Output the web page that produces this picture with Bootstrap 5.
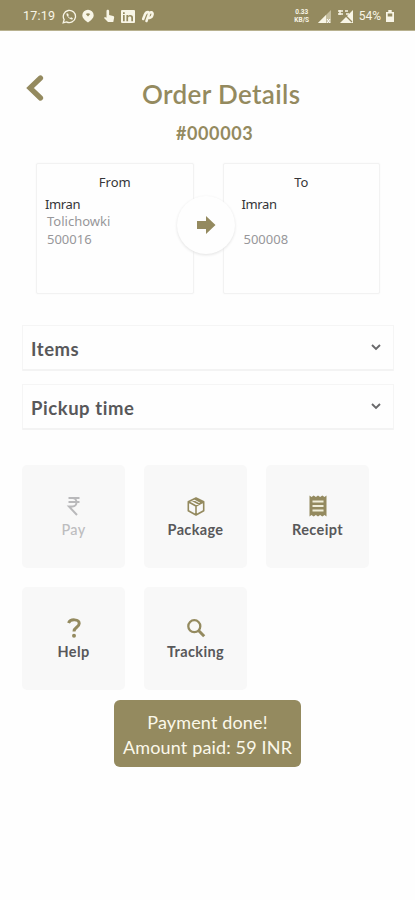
<!DOCTYPE html>
<html lang="en">
<head>
<meta charset="utf-8">
<meta name="viewport" content="width=device-width, initial-scale=1">
<title>Order Details</title>
<link href="https://cdn.jsdelivr.net/npm/bootstrap@5.3.0/dist/css/bootstrap.min.css" rel="stylesheet">
<style>
:root{--olive:#948a5f}
body{font-family:Lato,"Noto Sans",sans-serif;font-variant-ligatures:none;background:#fefefe;color:#58585a;height:900px;overflow:hidden}
svg{display:block;flex:none}
.olive{color:var(--olive)}
.status{height:31px;background:var(--olive);border-bottom:1px solid #b8b18f;color:#f8f5e6;padding:2px 21px 0 23px;font:12px/1 Roboto,sans-serif}
.status .clock{font-size:12.5px;letter-spacing:.25px;width:39px;white-space:nowrap}
.rate{font:bold 6.500px/8px Roboto,sans-serif;width:20px;text-align:center}
.rate span{display:block;height:8px}
.gap-icon{margin-left:6px}
.charge{margin:0 5px 0 5px}
.top-area{height:132px;padding:43px 0 0 25px}
.title{font-size:26px;line-height:32px;font-weight:600;letter-spacing:.35px;white-space:nowrap;margin:4px 0 0 98px}
.order-no{font-size:18px;line-height:24px;font-weight:700;letter-spacing:.6px;margin:11px 0 0 151px}
.addresses{padding:0 35px 0 36px;gap:29px;height:131px}
.address{font:13px/17.500px "Noto Sans",sans-serif;border:1px solid #f2f2f2;border-radius:2px;background:#fefefe;box-shadow:0 0 2px #f6f6f6;padding:9px 8px;color:#97979a}
.address .who{color:#353538;line-height:18px;margin-top:4px;letter-spacing:-.35px}
.address .head{color:#353538;line-height:18px}
.address .line{padding-left:2px}
.to-lines{padding-left:10px}
.go{left:177px;top:33px;width:58px;height:58px;background:#fefefe;box-shadow:0 1px 3px #e2e2e2}
.folds{padding:31px 21px 0 22px;gap:13px}
.fold{height:46px;border:1px solid #f5f5f5;border-bottom:2px solid #f3f3f3;border-radius:1px;background:#fefefe;padding:4px 12px 0 8px;font-size:18.5px;font-weight:700;letter-spacing:.55px}
.fold svg{margin-top:-4px}
.tiles{display:grid;grid-template-columns:repeat(3,103px);gap:19px;padding:35px 0 0 22px}
.tile{height:103px;background:#f8f8f8;border:0;border-radius:5px;padding:30px 0 0;font-size:14.500px;line-height:20px;font-weight:700;color:#58585a;letter-spacing:.35px}
.tile.off{color:#bdbdbf;font-weight:500}
.tile svg{margin-bottom:1px}
.note{width:187px;height:67px;margin:10px 0 0 114px;padding-top:2px;background:var(--olive);border-radius:6px;color:#fbf8ea;font-size:18px;line-height:25px;white-space:nowrap;letter-spacing:.15px}
</style>
<script src="https://cdn.jsdelivr.net/npm/bootstrap@5.3.0/dist/js/bootstrap.bundle.min.js"></script>
</head>
<body>
<header class="status d-flex align-items-center">
  <span class="clock">17:19</span>
  <svg width="15" height="15" viewBox="0 0 16 16" fill="none" stroke="currentColor" stroke-width="1.4"><path d="M1.3 14.7l1-3.4A6.5 6.5 0 1 1 4.800 13.700z"/><path d="M5 4.600c-.8 1 .2 3 1.700 4.500s3.600 2.600 4.600 1.700l.3-1-1.900-1-1 .9c-1-.4-1.800-1.200-2.200-2.200l.8-.9-.9-1.900z" fill="currentColor" stroke="none"/></svg>
  <svg class="ms-1" width="14" height="14" viewBox="0 0 14 14"><path fill="currentColor" d="M7 .8a5.700 5.700 0 0 1 5.700 5.400c0 3-3.100 5.300-5.700 7.300C4.400 11.500 1.300 9.200 1.300 6.200A5.700 5.700 0 0 1 7 .8z"/><path fill="#948a5f" d="M4.800 5c1.400-.9 3-.9 4.400 0L7 7.500z"/></svg>
  <svg class="ms-2" width="12" height="14" viewBox="0 0 12 14" fill="currentColor"><path d="M3.500 2c0-1.600 2.600-1.600 2.600 0v4l4 1c.9.300 1.200 1 1 1.800L10.300 13H5L1 9l.9-1 1.600.8z"/></svg>
  <svg class="gap-icon" width="14" height="13" viewBox="0 0 14 14" preserveAspectRatio="none"><rect width="14" height="14" rx="1" fill="currentColor"/><g fill="#948a5f"><path d="M2 5.500h1.700V12H2zM2 2.500h1.700v1.700H2zM5.400 5.500H7v.8c1.300-1.500 5-1.200 5 1.800V12h-1.700V8.500c0-2-3.200-1.800-3.200 0V12H5.400z"/></g></svg>
  <svg class="gap-icon" width="13" height="14" viewBox="0 0 13 14" fill="none" stroke="currentColor" stroke-width="2.500" stroke-linecap="round"><path d="M2.200 10L3.500 6.500C4.300 4 6 3 7 3M5.500 12L8 5c1-2.500 4-2 3.600.4C11.300 7.500 10 8.700 8.500 9"/></svg>
  <span class="rate ms-auto"><span>0.33</span><span>KB/S</span></span>
  <svg class="gap-icon" width="13" height="13" viewBox="0 0 13 13"><path d="M0 13L13 0v13z" fill="#c4bd9e"/><path d="M0 13l8-8v8z" fill="currentColor"/><path d="M9 9l3 4m0-4l-3 4" stroke="#fff"/></svg>
  <svg class="gap-icon" width="17" height="14" viewBox="0 0 17 14"><path d="M3 14L16 1v13z" fill="currentColor"/><path d="M1 2h5M1 5h5M3 1v5M8 2h3M9 5h3" stroke="currentColor" stroke-width="1.500"/><path d="M7 5l8 8" stroke="#948a5f" stroke-width="1.300"/></svg>
  <span class="charge">54%</span>
  <svg width="8" height="12" viewBox="0 0 7 12" preserveAspectRatio="none"><path d="M2 0h3v2h2v10H0V2h2z" fill="currentColor"/><path d="M1.500 3.500h4v3h-4z" fill="#948a5f"/></svg>
</header>

<main>
  <div class="top-area olive">
    <div class="d-flex">
      <svg width="19" height="28" viewBox="0 0 19 28" fill="none" stroke="currentColor" stroke-width="5.200"><path d="M15.500 4L5 14 15.500 24" stroke-linecap="round"/></svg>
      <h1 class="title">Order Details</h1>
    </div>
    <div class="order-no">#000003</div>
  </div>

  <section class="addresses d-flex position-relative">
    <div class="address flex-fill w-50">
      <div class="head text-center">From</div>
      <div class="who">Imran</div>
      <div class="line">Tolichowki</div>
      <div class="line">500016</div>
    </div>
    <div class="address flex-fill w-50">
      <div class="head text-center">To</div>
      <div class="to-lines">
        <div class="who">Imran</div>
        <div class="line">&nbsp;</div>
        <div class="line">500008</div>
      </div>
    </div>
    <div class="go rounded-circle position-absolute d-flex align-items-center justify-content-center olive">
      <svg width="19" height="18" viewBox="0 0 19 18" fill="currentColor"><path d="M0 5h9V0l9.500 9L9 18v-5H0z"/></svg>
    </div>
  </section>

  <section class="folds d-flex flex-column">
    <div class="fold d-flex align-items-center justify-content-between"><span>Items</span>
      <svg width="10" height="7" viewBox="0 0 10 7" fill="none" stroke="#69696b" stroke-width="1.900"><path d="M1 1l4 4 4-4"/></svg></div>
    <div class="fold d-flex align-items-center justify-content-between"><span>Pickup time</span>
      <svg width="10" height="7" viewBox="0 0 10 7" fill="none" stroke="#69696b" stroke-width="1.900"><path d="M1 1l4 4 4-4"/></svg></div>
  </section>

  <section class="tiles">
    <button class="tile off d-flex flex-column align-items-center">
      <svg width="20" height="24" viewBox="0 0 20 24" fill="none" stroke="#b9b9bb" stroke-width="2"><path d="M4.500 3h11M4.500 7h11M5 3h3.500c5.300 0 5.300 8.500 0 8.500H5l8 8.500"/></svg>Pay</button>
    <button class="tile d-flex flex-column align-items-center">
      <svg class="olive" width="20" height="24" viewBox="0 0 20 24" fill="none" stroke="currentColor" stroke-width="1.600" stroke-linejoin="round"><path d="M10 3l7.700 3.800v9L10 20l-7.700-4.200v-9zM2.300 6.800L10 11l7.700-4.200M10 11v9M6 5.300l7.500 4M9 4l7 3.700"/></svg>Package</button>
    <button class="tile d-flex flex-column align-items-center">
      <svg class="olive" width="20" height="24" viewBox="0 0 20 24"><path fill="currentColor" d="M1.500.5l2 1.500L5.700.5 7.900 2 10 .5 12.100 2l2.200-1.500L16.500 2l2-1.500v21l-2-1.500-2.200 1.500-2.200-1.500-2.100 1.500L7.900 20l-2.200 1.500L3.500 20l-2 1.500z"/><path d="M4.500 6.500h11M4.500 11h11M4.500 15.500h11" stroke="#f0eed9" stroke-width="1.900"/></svg>Receipt</button>
    <button class="tile d-flex flex-column align-items-center">
      <svg class="olive" width="20" height="24" viewBox="0 0 20 24"><path fill="none" stroke="currentColor" stroke-width="3" d="M4.500 6c2-4.500 10.700-4 10.700.5 0 4-5.200 3.600-5.200 8"/><circle cx="10" cy="18.700" r="2" fill="currentColor"/></svg>Help</button>
    <button class="tile d-flex flex-column align-items-center">
      <svg class="olive" width="20" height="24" viewBox="0 0 20 24" fill="none" stroke="currentColor"><circle cx="8.300" cy="9.200" r="6" stroke-width="2.300"/><path d="M12.500 13.500l5.700 5.700" stroke-width="3"/></svg>Tracking</button>
  </section>

  <div class="note d-flex flex-column align-items-center justify-content-center" role="status">
    <span>Payment done!</span><span>Amount paid: 59 INR</span>
  </div>
</main>
</body>
</html>
